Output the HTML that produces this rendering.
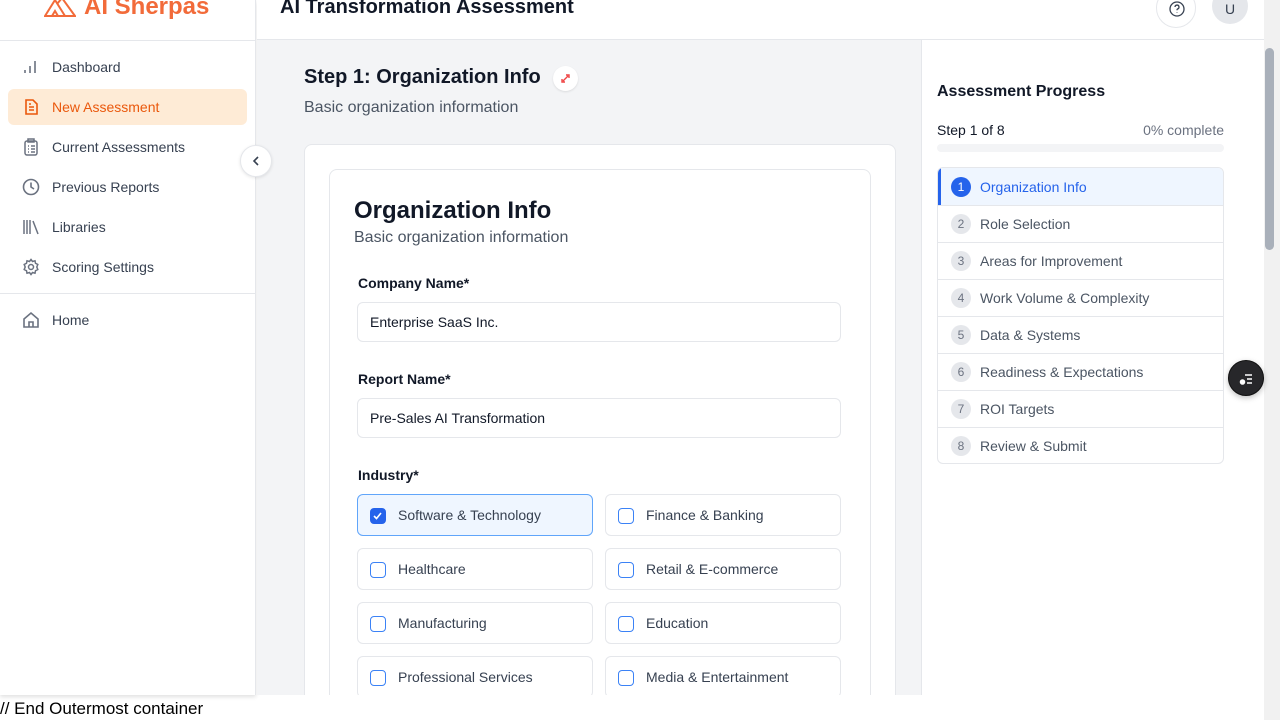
<!DOCTYPE html>
<html><head><meta charset="utf-8"><style>
*{box-sizing:border-box;margin:0;padding:0}
body{width:1280px;height:720px;overflow:hidden;background:#fff;font-family:"Liberation Sans",sans-serif;color:#111827;position:relative}
.side{position:absolute;left:0;top:0;width:256px;height:695px;background:#fff;border-right:1px solid #e5e7eb;box-shadow:0 2px 4px rgba(0,0,0,.12)}
.logo{position:absolute;left:44px;top:-7px;font-size:24px;font-weight:bold;color:#f26b3a;display:flex;gap:8px;align-items:center}
.sep{position:absolute;left:0;width:256px;height:1px;background:#e5e7eb}
.nav{position:absolute;left:8px;width:239px;height:36px;display:flex;align-items:center;font-size:14px;color:#374151;border-radius:6px}
.nav svg{position:absolute;left:14px}
.nav span{position:absolute;left:44px}
.nav.act{background:#feebd6;color:#ea580c}
.top{position:absolute;left:257px;top:0;width:1007px;height:40px;border-bottom:1px solid #e5e7eb;background:#fff}
.main{position:absolute;left:257px;top:40px;width:664px;height:655px;background:#f3f4f6;overflow:hidden}
.right{position:absolute;left:921px;top:40px;width:343px;height:655px;background:#fff;border-left:1px solid #e5e7eb}
.sb{position:absolute;left:1264px;top:0;width:16px;height:720px;background:#f1f1f1}
.thumb{position:absolute;left:1265px;top:48px;width:9px;height:202px;background:#a9b0ba;border-radius:5px}
.card{position:absolute;left:47px;top:104px;width:592px;height:600px;background:#fff;border:1px solid #e5e7eb;border-radius:8px}
.inner{position:absolute;left:24px;top:24px;width:542px;height:600px;border:1px solid #e5e7eb;border-radius:8px}
.lbl{position:absolute;left:28px;font-size:14px;font-weight:bold;color:#111827}
.inp{position:absolute;left:27px;width:484px;height:40px;border:1px solid #e5e7eb;border-radius:6px;font-size:14px;padding-left:12px;line-height:38px;color:#111827}
.opt{position:absolute;width:236px;height:42px;border:1px solid #e5e7eb;border-radius:6px;font-size:14px;color:#374151;line-height:40px;padding-left:40px}
.opt i{position:absolute;left:12px;top:13px;width:16px;height:16px;border:1.5px solid #3b82f6;border-radius:4px}
.opt.on{background:#eff6ff;border-color:#60a5fa}
.opt.on i{background:#2563eb;border-color:#2563eb}
.step{position:absolute;left:16px;width:286px;height:37px;border-top:1px solid #e5e7eb;font-size:14px;color:#4b5563;display:flex;align-items:center}
.step b{position:absolute;left:13px;width:20px;height:20px;border-radius:50%;background:#e5e7eb;color:#6b7280;font-size:12px;font-weight:normal;text-align:center;line-height:20px}
.step span{position:absolute;left:42px}
</style></head><body>
<div class="side">
 <div class="logo"><svg width="32" height="22" viewBox="0 0 32 22" fill="none" stroke="#f26b3a" stroke-width="2"><path d="M1 20 L11 4 L21 20 Z M13 8 L18 2 L31 20 H19"/><path d="M8 20 L11 15 L14 20"/></svg>AI Sherpas</div>
 <div class="sep" style="top:40px"></div>
 <div class="nav" style="top:49px"><svg width="16" height="16" fill="none" stroke="#6b7280" stroke-width="1.6"><path d="M3 14v-3M8 14V7M13 14V2"/></svg><span>Dashboard</span></div>
 <div class="nav act" style="top:89px"><svg width="18" height="18" fill="none" stroke="#ea580c" stroke-width="1.6"><path d="M4 2h7l4 4v10H4z M7 9h5M7 12h5M7 6h2"/></svg><span>New Assessment</span></div>
 <div class="nav" style="top:129px"><svg width="18" height="18" fill="none" stroke="#6b7280" stroke-width="1.5"><rect x="3" y="3" width="12" height="14" rx="2"/><rect x="6" y="1" width="6" height="3"/><path d="M6 8h1M9 8h4M6 11h1M9 11h4M6 14h1M9 14h4"/></svg><span>Current Assessments</span></div>
 <div class="nav" style="top:169px"><svg width="18" height="18" fill="none" stroke="#6b7280" stroke-width="1.6"><circle cx="9" cy="9" r="7.5"/><path d="M9 4.5V9l3 2"/></svg><span>Previous Reports</span></div>
 <div class="nav" style="top:209px"><svg width="18" height="18" fill="none" stroke="#6b7280" stroke-width="1.5"><path d="M2 2v14M5 2v14M8 2v14M11 3l5 13"/></svg><span>Libraries</span></div>
 <div class="nav" style="top:249px"><svg width="18" height="18" fill="none" stroke="#6b7280" stroke-width="1.5"><circle cx="9" cy="9" r="2.5"/><path d="M9 1.5l1.5 2 2.5-.7.5 2.5 2.3 1.2-1 2.5 1 2.5-2.3 1.2-.5 2.5-2.5-.7L9 16.5l-1.5-2-2.5.7-.5-2.5L2.2 11.5l1-2.5-1-2.5L4.5 5.3 5 2.8l2.5.7z"/></svg><span>Scoring Settings</span></div>
 <div class="sep" style="top:293px"></div>
 <div class="nav" style="top:302px"><svg width="18" height="18" fill="none" stroke="#6b7280" stroke-width="1.6"><path d="M2 8l7-6 7 6v8H2z M7 16v-5h4v5"/></svg><span>Home</span></div>
</div>
<div style="position:absolute;left:240px;top:145px;width:32px;height:32px;border-radius:50%;background:#fff;border:1px solid #e5e7eb;box-shadow:0 1px 3px rgba(0,0,0,.1);z-index:3"><svg width="30" height="30" fill="none" stroke="#374151" stroke-width="1.6"><path d="M17 11l-4 4 4 4"/></svg></div>
<div class="top">
 <div style="position:absolute;left:23px;top:-4px;font-size:20px;font-weight:bold;color:#111827">AI Transformation Assessment</div>
 <div style="position:absolute;left:899px;top:-12px;width:40px;height:40px;border-radius:50%;border:1px solid #e5e7eb"><svg width="40" height="40" fill="none" stroke="#374151" stroke-width="1.3"><circle cx="20" cy="20" r="7"/><path d="M18 18a2 2 0 1 1 2.5 2c-.5.2-.5.6-.5 1.3M20 23.2v.5"/></svg></div>
 <div style="position:absolute;left:955px;top:-12px;width:36px;height:36px;border-radius:50%;background:#e5e7eb;text-align:center;line-height:42px;font-size:14px;color:#374151">U</div>
</div>
<div class="main">
 <div style="position:absolute;left:47px;top:26px;font-size:20px;font-weight:bold">Step 1: Organization Info</div>
 <div style="position:absolute;left:296px;top:26px;width:25px;height:25px;border-radius:50%;background:#fff;box-shadow:0 1px 2px rgba(0,0,0,.1)"><svg width="25" height="25" fill="none" stroke="#ef4444" stroke-width="1.4"><path d="M10 15l5-5M13 9h3v3M9 13v3h3"/></svg></div>
 <div style="position:absolute;left:47px;top:59px;font-size:16px;color:#4b5563">Basic organization information</div>
 <div class="card"><div class="inner">
  <div style="position:absolute;left:24px;top:27px;font-size:24px;font-weight:bold;color:#111827">Organization Info</div>
  <div style="position:absolute;left:24px;top:59px;font-size:16px;color:#4b5563">Basic organization information</div>
  <div class="lbl" style="top:105px">Company Name*</div>
  <div class="inp" style="top:132px">Enterprise SaaS Inc.</div>
  <div class="lbl" style="top:201px">Report Name*</div>
  <div class="inp" style="top:228px">Pre-Sales AI Transformation</div>
  <div class="lbl" style="top:297px">Industry*</div>
  <div class="opt on" style="left:27px;top:324px"><i><svg width="13" height="13" fill="none" stroke="#fff" stroke-width="1.6" style="position:absolute;left:0;top:0"><path d="M3 7l2.5 2.5L10 4"/></svg></i>Software &amp; Technology</div>
  <div class="opt" style="left:275px;top:324px"><i></i>Finance &amp; Banking</div>
  <div class="opt" style="left:27px;top:378px"><i></i>Healthcare</div>
  <div class="opt" style="left:275px;top:378px"><i></i>Retail &amp; E-commerce</div>
  <div class="opt" style="left:27px;top:432px"><i></i>Manufacturing</div>
  <div class="opt" style="left:275px;top:432px"><i></i>Education</div>
  <div class="opt" style="left:27px;top:486px"><i></i>Professional Services</div>
  <div class="opt" style="left:275px;top:486px"><i></i>Media &amp; Entertainment</div>
 </div></div>
</div>
<div class="right">
 <div style="position:absolute;left:15px;top:43px;font-size:16px;font-weight:bold;color:#111827">Assessment Progress</div>
 <div style="position:absolute;left:15px;top:82px;font-size:14px;color:#111827">Step 1 of 8</div>
 <div style="position:absolute;right:40px;top:82px;font-size:14px;color:#6b7280">0% complete</div>
 <div style="position:absolute;left:15px;top:104px;width:287px;height:8px;border-radius:4px;background:#f3f4f6"></div>
 <div style="position:absolute;left:15px;top:127px;width:287px;height:297px;border:1px solid #e5e7eb;border-radius:6px;overflow:hidden">
  <div style="position:absolute;left:0;top:0;width:287px;height:37px;background:#eff6ff;border-left:3px solid #2563eb"></div>
 </div>
 <div class="step" style="top:128px;border-top:none;color:#2563eb"><b style="background:#2563eb;color:#fff">1</b><span>Organization Info</span></div>
 <div class="step" style="top:165px"><b>2</b><span>Role Selection</span></div>
 <div class="step" style="top:202px"><b>3</b><span>Areas for Improvement</span></div>
 <div class="step" style="top:239px"><b>4</b><span>Work Volume &amp; Complexity</span></div>
 <div class="step" style="top:276px"><b>5</b><span>Data &amp; Systems</span></div>
 <div class="step" style="top:313px"><b>6</b><span>Readiness &amp; Expectations</span></div>
 <div class="step" style="top:350px"><b>7</b><span>ROI Targets</span></div>
 <div class="step" style="top:387px"><b>8</b><span>Review &amp; Submit</span></div>
</div>
<div class="sb"></div><div class="thumb"></div>
<div style="position:absolute;left:1228px;top:360px;width:36px;height:36px;border-radius:50%;background:#27272a;border:1.5px solid #111;box-shadow:0 2px 6px rgba(0,0,0,.25)"><svg width="34" height="34" fill="none" stroke="#fff" stroke-width="1.5"><path d="M16 14h7M18 18h5M18 22h5"/><circle cx="13.5" cy="21" r="2" fill="#fff"/></svg></div>
<div style="position:absolute;left:0;top:699px;font-size:17px;color:#000">// End Outermost container</div>
</body></html>
